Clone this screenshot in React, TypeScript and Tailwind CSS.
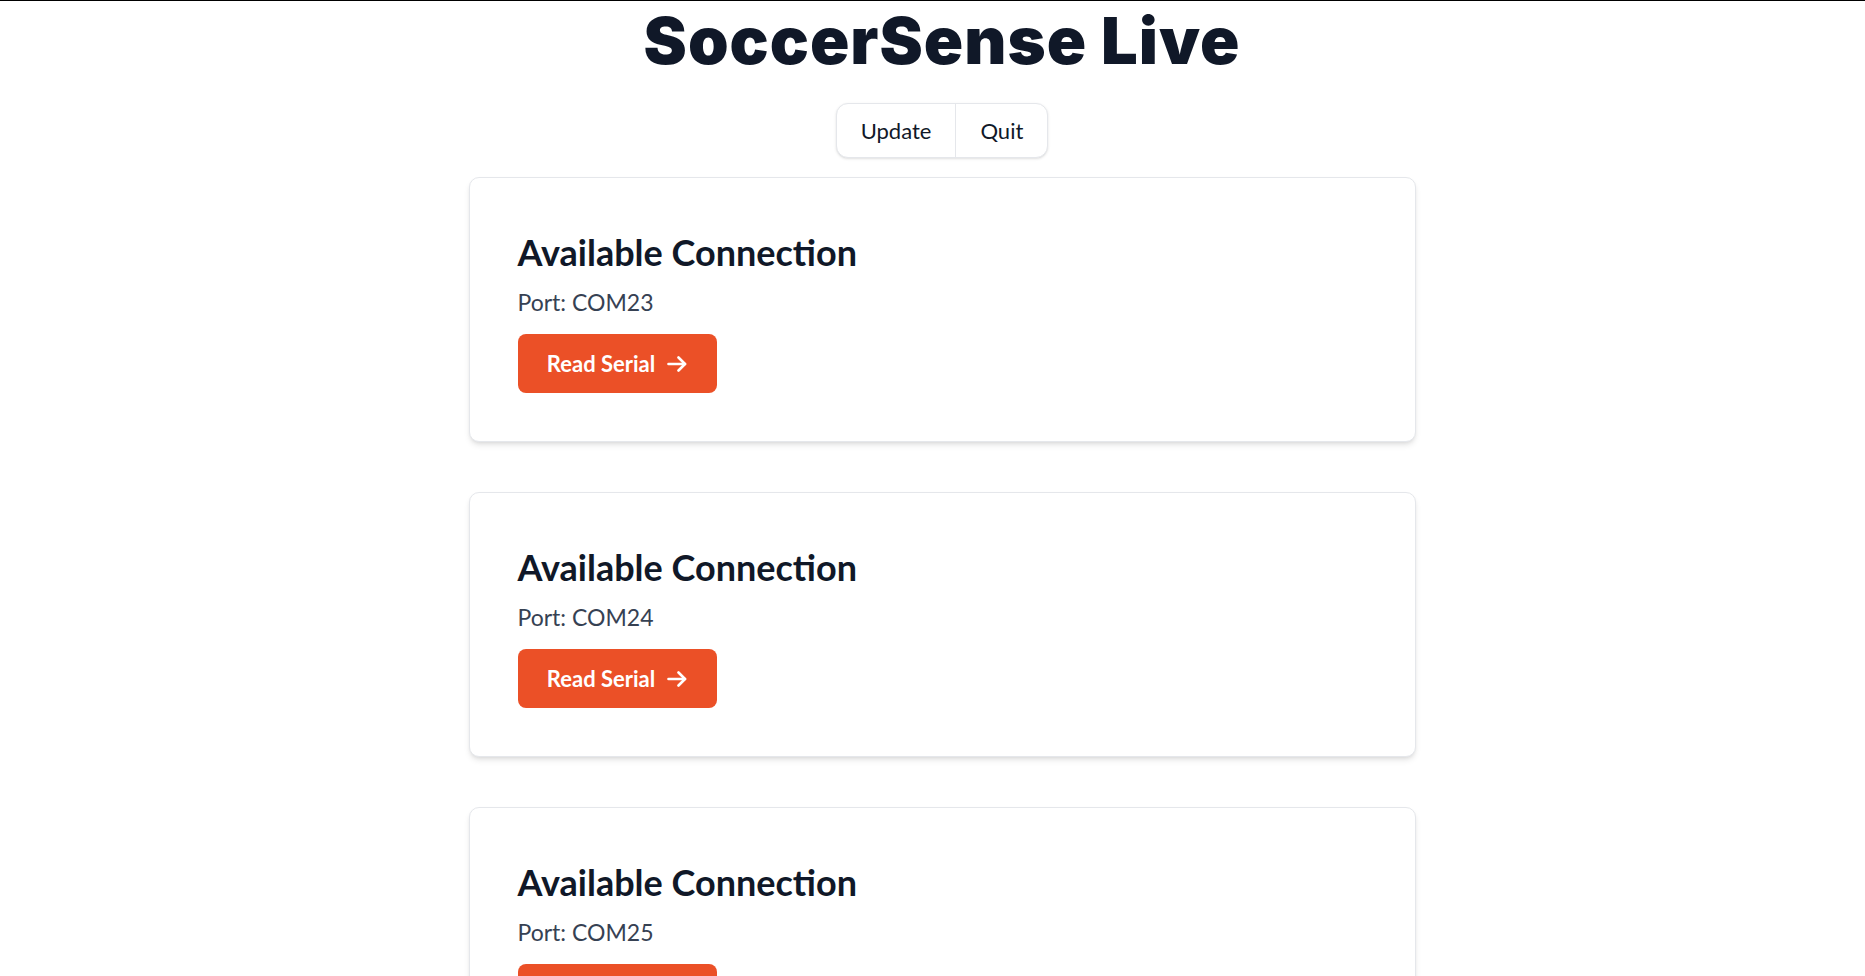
import React from 'react';

const ports = ['COM23', 'COM24', 'COM25'];

const Arrow = () => (
  <svg width="20" height="16" viewBox="0 0 20 16" fill="none" stroke="currentColor" strokeWidth="2.6" strokeLinecap="round" strokeLinejoin="round">
    <path d="M1.5 8h16.5" />
    <path d="M11.5 1.5 18 8l-6.5 6.5" />
  </svg>
);

const ConnectionCard: React.FC<{ port: string }> = ({ port }) => (
  <div className="w-full bg-white border border-gray-200 rounded-[10px] shadow-md p-12">
    <h2 className="text-[36px] leading-[48px] font-bold text-gray-900 pt-[2px]">
      Available Connection
    </h2>
    <p className="text-[23px] leading-[32px] text-gray-700 mt-[10px]">Port: {port}</p>
    <button className="mt-[16px] h-[59px] w-[199px] rounded-lg bg-[#eb5027] text-white text-[22px] font-bold flex items-center justify-center gap-[12px]">
      <span>Read Serial</span>
      <Arrow />
    </button>
  </div>
);

export default function App() {
  return (
    <div
      className="min-h-screen bg-white border-t border-black flex flex-col items-center pl-[19px]"
      style={{ fontFamily: 'Lato, "Noto Sans", sans-serif' }}
    >
      <h1
        className="text-[65px] leading-[80px] font-black tracking-[1px] text-gray-900"
        style={{ fontFamily: 'Inter, "Noto Sans", sans-serif' }}
      >
        SoccerSense Live
      </h1>
      <div className="mt-[22px] flex rounded-xl border border-gray-200 shadow-sm bg-white">
        <button className="h-[53px] px-6 text-[22px] text-gray-900">Update</button>
        <button className="h-[53px] px-6 text-[22px] text-gray-900 border-l border-gray-200">Quit</button>
      </div>
      <div className="mt-[19px] w-[947px] flex flex-col gap-[50px] pb-12">
        {ports.map((p) => (
          <ConnectionCard key={p} port={p} />
        ))}
      </div>
    </div>
  );
}
